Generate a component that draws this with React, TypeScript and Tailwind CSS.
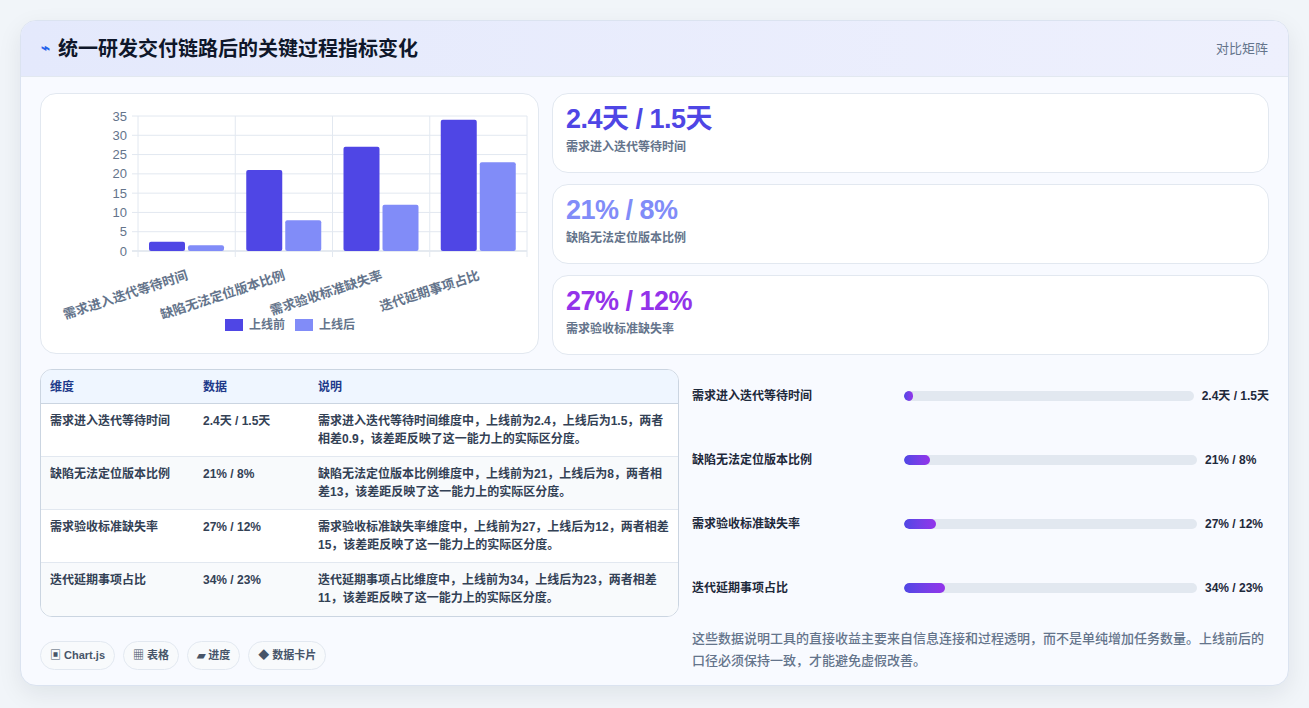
import React from "react";

const cats = ["需求进入迭代等待时间", "缺陷无法定位版本比例", "需求验收标准缺失率", "迭代延期事项占比"];
const before = [2.4, 21, 27, 34];
const after = [1.5, 8, 12, 23];

function Chart() {
  const x0 = 97, x1 = 486, yTop = 22, yBot = 157;
  const u = (yBot - yTop) / 35;
  const cw = (x1 - x0) / 4;
  return (
    <svg width="498" height="260" viewBox="0 0 498 260">
      {[0, 5, 10, 15, 20, 25, 30, 35].map((v) => {
        const y = yBot - v * u;
        return (
          <g key={v}>
            <line x1={x0 - 6} x2={x1} y1={y} y2={y} stroke={v === 0 ? "#cbd5e1" : "#e2e8f0"} />
            <text x={x0 - 11} y={y + 4.5} textAnchor="end" fontSize="13" fill="#64748b">{v}</text>
          </g>
        );
      })}
      {[0, 1, 2, 3, 4].map((i) => (
        <line key={i} x1={x0 + i * cw} x2={x0 + i * cw} y1={yTop} y2={yBot + 6} stroke="#e2e8f0" />
      ))}
      {cats.map((c, i) => {
        const bx = x0 + i * cw + 11;
        const lx = x0 + i * cw + cw / 2 + 2;
        const ly = yBot + 28;
        return (
          <g key={c}>
            <rect x={bx} y={yBot - before[i] * u} width={36} height={before[i] * u} rx={2} fill="#4f46e5" />
            <rect x={bx + 39} y={yBot - after[i] * u} width={36} height={after[i] * u} rx={2} fill="#818cf8" />
            <text x={lx} y={ly} textAnchor="end" fontSize="13" fontWeight="600" fill="#64748b" transform={`rotate(-18 ${lx} ${ly})`}>{c}</text>
          </g>
        );
      })}
      <rect x={184} y={225} width={18} height={12} fill="#4f46e5" />
      <text x={208} y={235} fontSize="12" fontWeight="600" fill="#64748b">上线前</text>
      <rect x={254} y={225} width={18} height={12} fill="#818cf8" />
      <text x={278} y={235} fontSize="12" fontWeight="600" fill="#64748b">上线后</text>
    </svg>
  );
}

const stats = [
  { v: "2.4天 / 1.5天", l: "需求进入迭代等待时间", c: "text-[#4f46e5]" },
  { v: "21% / 8%", l: "缺陷无法定位版本比例", c: "text-[#818cf8]" },
  { v: "27% / 12%", l: "需求验收标准缺失率", c: "text-[#9333ea]" },
];

const rows = [
  ["需求进入迭代等待时间", "2.4天 / 1.5天", "需求进入迭代等待时间维度中，上线前为2.4，上线后为1.5，两者相差0.9，该差距反映了这一能力上的实际区分度。"],
  ["缺陷无法定位版本比例", "21% / 8%", "缺陷无法定位版本比例维度中，上线前为21，上线后为8，两者相差13，该差距反映了这一能力上的实际区分度。"],
  ["需求验收标准缺失率", "27% / 12%", "需求验收标准缺失率维度中，上线前为27，上线后为12，两者相差15，该差距反映了这一能力上的实际区分度。"],
  ["迭代延期事项占比", "34% / 23%", "迭代延期事项占比维度中，上线前为34，上线后为23，两者相差11，该差距反映了这一能力上的实际区分度。"],
];
const widths = [3, 9, 11, 14];

export default function App() {
  return (
    <div className="w-[1309px] h-[708px] bg-[#f1f5f9] p-5 pb-0" style={{ fontFamily: '"Liberation Sans","Noto Sans CJK SC",sans-serif' }}>
      <div className="h-[666px] rounded-2xl border border-[#dbe3f0] bg-[#f8faff] shadow-[0_8px_24px_rgba(15,23,42,0.08)] overflow-hidden">
        <div className="h-[56px] flex items-center justify-between px-5 border-b border-[#e2e8f0] bg-gradient-to-r from-[#e4e9fc] to-[#eef0fd]">
          <div className="flex items-center gap-2">
            <span className="text-[#2563eb] text-[15px] font-bold">⌁</span>
            <span className="text-[20px] font-bold text-[#0f172a]">统一研发交付链路后的关键过程指标变化</span>
          </div>
          <span className="text-[13px] text-[#64748b]">对比矩阵</span>
        </div>
        <div className="px-[19px] pt-[16px]">
          <div className="flex gap-[13px]">
            <div className="w-[499px] h-[261px] rounded-2xl border border-[#e2e8f0] bg-white overflow-hidden">
              <Chart />
            </div>
            <div className="flex-1 flex flex-col gap-[11px]">
              {stats.map((s) => (
                <div key={s.l} className="h-[80px] rounded-2xl border border-[#e2e8f0] bg-white px-[13px] pt-[8px]">
                  <div className={`text-[27px] leading-[34px] font-bold tracking-[-0.5px] ${s.c}`}>{s.v}</div>
                  <div className="text-[12px] font-semibold text-[#64748b] mt-[2px]">{s.l}</div>
                </div>
              ))}
            </div>
          </div>
          <div className="flex gap-[13px] mt-[14px]">
            <div className="w-[639px] shrink-0">
              <div className="rounded-xl border border-[#cbd5e1] overflow-hidden bg-white">
                <div className="flex h-[34px] items-center bg-[#eff6ff] border-b border-[#cbd5e1] text-[12px] font-bold text-[#1e3a8a]">
                  <div className="w-[153px] pl-[9px]">维度</div>
                  <div className="w-[115px] pl-[9px]">数据</div>
                  <div className="flex-1 pl-[9px]">说明</div>
                </div>
                {rows.map((r, i) => (
                  <div key={i} className={`flex text-[12px] font-semibold text-[#334155] leading-[18px] py-[8px] h-[53px] ${i < 3 ? "border-b border-[#e2e8f0]" : ""} ${i % 2 === 1 ? "bg-[#f8fafc]" : "bg-white"}`}>
                    <div className="w-[153px] pl-[9px]">{r[0]}</div>
                    <div className="w-[115px] pl-[9px]">{r[1]}</div>
                    <div className="flex-1 pl-[9px] pr-[8px]">{r[2]}</div>
                  </div>
                ))}
              </div>
              <div className="flex gap-[8px] mt-[24px] text-[11px] font-semibold text-[#475569]">
                {["▣ Chart.js", "▦ 表格", "▰ 进度", "◆ 数据卡片"].map((t) => (
                  <span key={t} className="h-[29px] px-[9px] flex items-center rounded-full border border-[#e2e8f0] bg-[#f8fafc]">{t}</span>
                ))}
              </div>
            </div>
            <div className="flex-1 -mt-[5px]">
              {rows.map((r, i) => (
                <div key={i} className="flex items-center h-[64px]">
                  <div className="w-[212px] text-[12px] font-semibold text-[#1e293b]">{r[0]}</div>
                  <div className="flex-1 h-[10px] rounded-full bg-[#e2e8f0] overflow-hidden">
                    <div className="h-full rounded-full bg-gradient-to-r from-[#4f46e5] to-[#9333ea]" style={{ width: `${widths[i]}%` }} />
                  </div>
                  <div className="min-w-[72px] pl-[8px] text-[12px] font-semibold text-[#1e293b] whitespace-nowrap">{r[1]}</div>
                </div>
              ))}
              <p className="mt-[8px] text-[13px] leading-[22px] text-[#64748b] font-medium">这些数据说明工具的直接收益主要来自信息连接和过程透明，而不是单纯增加任务数量。上线前后的口径必须保持一致，才能避免虚假改善。</p>
            </div>
          </div>
        </div>
      </div>
    </div>
  );
}
